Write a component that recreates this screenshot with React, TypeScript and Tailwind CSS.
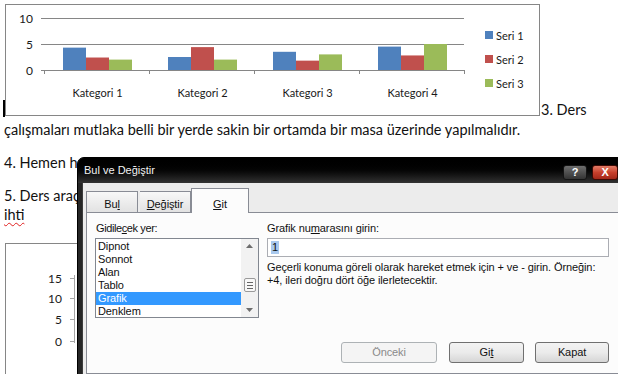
import React from 'react';

const series = [
  { name: 'Seri 1', color: '#4f81bd', values: [4.3, 2.5, 3.5, 4.5] },
  { name: 'Seri 2', color: '#c0504d', values: [2.4, 4.4, 1.8, 2.8] },
  { name: 'Seri 3', color: '#9bbb59', values: [2, 2, 3, 5] },
];
const categories = ['Kategori 1', 'Kategori 2', 'Kategori 3', 'Kategori 4'];

function ColumnChart() {
  // plot origin and scale, measured from the screenshot
  const x0 = 38;
  const base = 65;
  const catW = 105;
  const barW = 23;
  const unit = 5.2;

  return (
    <svg width="533" height="110" className="block" fontFamily="Lato, sans-serif">
      {[13, 39].map((y) => (
        <line key={y} x1={x0 - 3} x2={x0 + 420} y1={y + 0.5} y2={y + 0.5} stroke="#868686" />
      ))}
      {['10', '5', '0'].map((t, i) => (
        <text key={t} x={27} y={13 + 26 * i} textAnchor="end" dominantBaseline="central" fontSize="12" fill="#1a1a1a">
          {t}
        </text>
      ))}
      {categories.map((c, ci) => (
        <g key={c}>
          {series.map((s, si) => {
            const h = s.values[ci] * unit;
            return (
              <rect key={s.name} x={x0 + ci * catW + 19 + si * barW} y={base - h} width={barW} height={h} fill={s.color} />
            );
          })}
          <text x={x0 + ci * catW + catW / 2 + 1} y={87} textAnchor="middle" dominantBaseline="central" fontSize="11" fill="#1a1a1a">
            {c}
          </text>
        </g>
      ))}
      <line x1={x0 - 3} x2={x0 + 420} y1={base + 0.5} y2={base + 0.5} stroke="#868686" />
      {[0, 1, 2, 3, 4].map((i) => (
        <line key={i} x1={x0 + i * catW + 0.5} x2={x0 + i * catW + 0.5} y1={base} y2={base + 4} stroke="#868686" />
      ))}
      {series.map((s, i) => (
        <g key={s.name}>
          <rect x={479} y={26 + i * 24} width={8} height={8} fill={s.color} />
          <text x={490} y={30 + i * 24} dominantBaseline="central" fontSize="11" fill="#1a1a1a">
            {s.name}
          </text>
        </g>
      ))}
    </svg>
  );
}

function SecondChart() {
  const ticks = [
    { t: '15', y: 34 },
    { t: '10', y: 54 },
    { t: '5', y: 75 },
    { t: '0', y: 97 },
  ];
  return (
    <svg width="300" height="140" className="block" fontFamily="Lato, sans-serif">
      <line x1={68.5} x2={68.5} y1={31} y2={99} stroke="#a6a6a6" />
      {ticks.map((k) => (
        <g key={k.t}>
          <line x1={64} x2={69} y1={k.y + 0.5} y2={k.y + 0.5} stroke="#a6a6a6" />
          <text x={56} y={k.y} textAnchor="end" dominantBaseline="central" fontSize="12" fill="#1a1a1a">
            {k.t}
          </text>
        </g>
      ))}
    </svg>
  );
}

function Arrow({ up }: { up?: boolean }) {
  return (
    <svg width="7" height="4" viewBox="0 0 7 4">
      <path d={up ? 'M0 4 L3.5 0 L7 4 Z' : 'M0 0 L3.5 4 L7 0 Z'} fill="#6d6d6d" />
    </svg>
  );
}

const items = ['Dipnot', 'Sonnot', 'Alan', 'Tablo', 'Grafik', 'Denklem'];

function Dialog() {
  return (
    <div className="absolute left-[77px] top-[157px] w-[570px] h-[232px] flex flex-col rounded-tl-[7px] border border-black bg-[#262626] overflow-hidden font-['Liberation_Sans',Arial,sans-serif] text-[11px] tracking-[-0.1px] text-[#111]">
      <div className="h-[25px] shrink-0 flex items-start bg-linear-to-b from-[#000000] via-[#060606] to-[#333333] pl-[6px] pr-[28px]">
        <span className="mt-[6px] text-[#f2f2f2] text-[11px] leading-[13px] tracking-normal">Bul ve Değiştir</span>
        <div className="ml-auto mt-[7px] flex gap-[5px]">
          <div className="w-[24px] h-[15px] rounded-[3px] border border-[#141414] bg-linear-to-b from-[#6e6e6e] to-[#343434] flex items-center justify-center text-white font-bold text-[11px] leading-none">
            ?
          </div>
          <div className="w-[26px] h-[15px] rounded-[3px] border border-[#3e0a04] bg-linear-to-b from-[#e07a66] via-[#c8402c] to-[#a3281a] flex items-center justify-center text-white font-bold text-[11px] leading-none">
            X
          </div>
        </div>
      </div>
      <div className="flex-1 pl-[4px] flex">
        <div className="flex-1 bg-[#ececec] border-l border-[#3c3c3c] pl-[3px] pt-[5px]">
          <div className="relative z-10 flex items-end h-[25px]">
            <div className="mb-px w-[52px] h-[21px] border border-b-0 border-[#898c95] bg-linear-to-b from-[#f8f8f8] to-[#e2e2e2] flex justify-center pt-[6px] leading-[12px]">
              <span>
                Bu<u>l</u>
              </span>
            </div>
            <div className="mb-px ml-[2px] w-[51px] h-[21px] border border-b-0 border-l-0 border-[#898c95] bg-linear-to-b from-[#f8f8f8] to-[#e2e2e2] flex justify-center pt-[6px] leading-[12px]">
              <span>
                <u>D</u>eğiştir
              </span>
            </div>
            <div className="w-[58px] h-[25px] border border-b-0 border-[#898c95] bg-[#fcfcfc] flex justify-center pt-[9px] leading-[12px]">
              <span>
                <u>G</u>it
              </span>
            </div>
          </div>
          <div className="-mt-px w-[600px] h-[162px] border border-[#898c95] bg-[#fcfcfc] flex pl-[8px] pt-[9px]">
            <div className="w-[164px] shrink-0">
              <div className="pl-[1px] leading-[12px] tracking-[-0.4px]">
                Gidile<u>c</u>ek yer:
              </div>
              <div className="mt-[4px] h-[80px] border border-[#828790] bg-white flex">
                <div className="flex-1 pt-px">
                  {items.map((it) => (
                    <div
                      key={it}
                      className={
                        it === 'Grafik'
                          ? 'h-[13px] leading-[13px] pl-[2px] bg-[#3399ff] text-white'
                          : 'h-[13px] leading-[13px] pl-[2px]'
                      }
                    >
                      {it}
                    </div>
                  ))}
                </div>
                <div className="w-[17px] bg-[#f2f2f2] flex flex-col items-center">
                  <div className="h-[14px] flex items-center">
                    <Arrow up />
                  </div>
                  <div className="mt-[25px] w-[12px] h-[14px] border border-[#9a9a9a] rounded-[2px] bg-[#f8f8f8] flex flex-col items-center justify-center gap-[2px]">
                    <div className="w-[6px] h-px bg-[#666]" />
                    <div className="w-[6px] h-px bg-[#666]" />
                    <div className="w-[6px] h-px bg-[#666]" />
                  </div>
                  <div className="mt-auto h-[14px] flex items-center">
                    <Arrow />
                  </div>
                </div>
              </div>
            </div>
            <div className="ml-[8px] w-[342px] shrink-0">
              <div className="leading-[12px]">
                Grafik nu<u>m</u>arasını girin:
              </div>
              <div className="mt-[4px] h-[19px] border border-[#abadb3] bg-white flex items-center pl-[3px]">
                <span className="bg-[#a9c9ee] px-px leading-[13px]">1</span>
              </div>
              <div className="mt-[4px] leading-[13px]">
                Geçerli konuma göreli olarak hareket etmek için + ve - girin. Örneğin:
                <br />
                +4, ileri doğru dört öğe ilerletecektir.
              </div>
              <div className="mt-[55px] flex justify-end">
                <div className="w-[96px] h-[21px] rounded-[3px] border border-[#adb2b5] bg-[#f4f4f4] text-[#8a8a8a] flex items-center justify-center">
                  Önceki
                </div>
                <div className="ml-[12px] w-[75px] h-[21px] rounded-[3px] border border-[#707070] bg-linear-to-b from-[#f3f3f3] via-[#ebebeb] to-[#d6d6d6] flex items-center justify-center">
                  <span>
                    Gi<u>t</u>
                  </span>
                </div>
                <div className="ml-[11px] w-[74px] h-[21px] rounded-[3px] border border-[#707070] bg-linear-to-b from-[#f3f3f3] via-[#ebebeb] to-[#d6d6d6] flex items-center justify-center">
                  Kapat
                </div>
              </div>
            </div>
          </div>
        </div>
      </div>
    </div>
  );
}

export default function App() {
  return (
    <div className="relative w-[618px] h-[374px] overflow-hidden bg-white font-['Lato',sans-serif] text-[14.5px] text-[#111]">
      <div className="pt-[4px] pl-[4px]">
        <div className="flex items-end">
          <div className="relative ml-[1px] mb-[3px] w-[535px] h-[112px] border border-[#868686]">
            <ColumnChart />
            <div className="absolute left-[-3px] bottom-[-2px] w-[2px] h-[17px] bg-black" />
          </div>
          <span className="ml-[1px] leading-[19px] whitespace-nowrap">3. Ders</span>
        </div>
        <p className="mt-px leading-[19px] whitespace-nowrap">
          çalışmaları mutlaka belli bir yerde sakin bir ortamda bir masa üzerinde yapılmalıdır.
        </p>
        <p className="mt-[14px] leading-[19px] whitespace-nowrap">4. Hemen he</p>
        <p className="mt-[14px] leading-[19px] whitespace-nowrap">
          5. Ders araç
          <br />
          <span className="underline decoration-wavy decoration-[#e02020] decoration-1 underline-offset-2">ihti</span>
        </p>
        <div className="mt-[19px] ml-[1px] w-[420px] h-[200px] border border-[#868686]">
          <SecondChart />
        </div>
      </div>
      <Dialog />
    </div>
  );
}
